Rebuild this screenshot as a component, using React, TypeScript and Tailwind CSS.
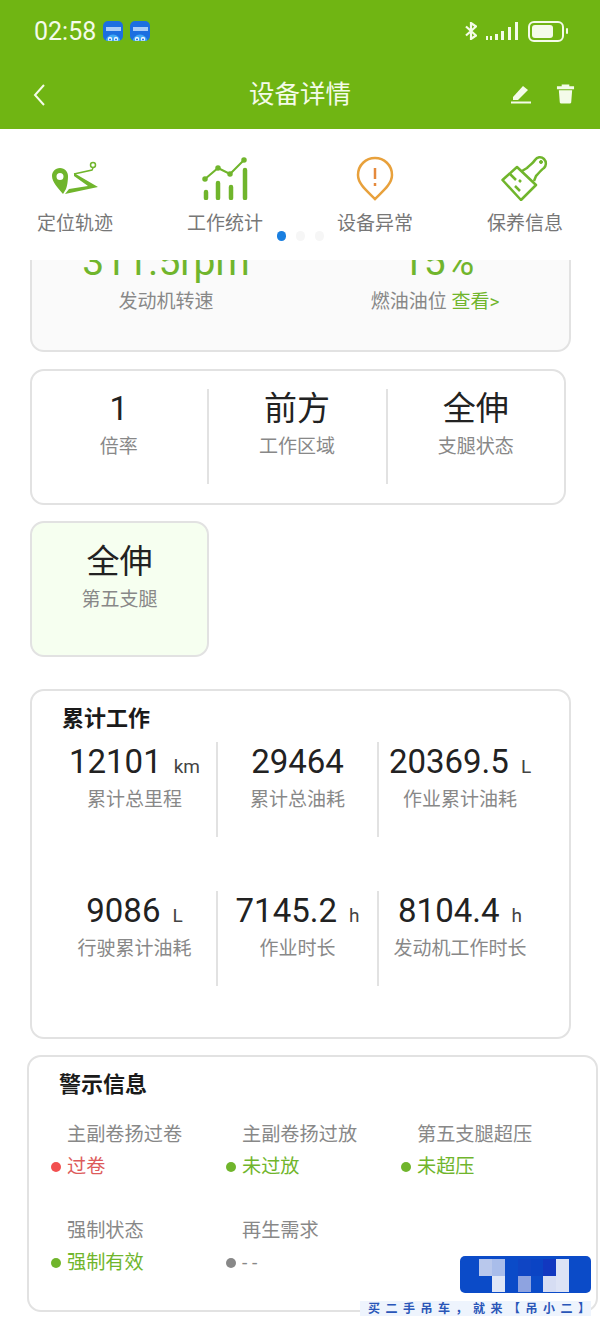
import React from "react";

const cjk = "font-['Roboto','Noto_Sans_CJK_SC',sans-serif]";

const AppBadge = () => (
  <div className="relative h-[20px] w-[20px] overflow-hidden rounded-[5px] bg-[#1c6fe0]">
    <div className="mx-auto mt-[6px] h-[4px] w-[15px] bg-[#a9cdf6]" />
    <svg viewBox="0 0 20 9" className="absolute bottom-0 left-0 h-[9px] w-[20px]">
      <circle cx="10" cy="10" r="7.500" fill="#3fa9f5" />
      <circle cx="7" cy="7" r="2.200" fill="#e8f4ff" />
      <circle cx="13" cy="7" r="2.200" fill="#e8f4ff" />
      <circle cx="7" cy="7.500" r="1" fill="#1c6fe0" />
      <circle cx="13" cy="7.500" r="1" fill="#1c6fe0" />
    </svg>
  </div>
);

const StatusBar = () => (
  <div className="flex h-[62px] items-center justify-between pl-[34px] pr-[36px]">
    <div className="flex items-center">
      <span className="text-[25px] leading-none text-[#f4fbe9]">02:58</span>
      <div className="ml-[7px] flex gap-[7px]">
        <AppBadge />
        <AppBadge />
      </div>
    </div>
    <div className="flex items-center">
      <svg viewBox="0 0 12 18" className="h-[18px] w-[12px]" fill="none" stroke="#f4fbe9" strokeWidth="2.200">
        <path d="M1 4.500l10 9-5 3.500V1l5 3.500-10 9" />
      </svg>
      <svg viewBox="0 0 34 19" className="ml-[9px] h-[19px] w-[34px]" fill="#f4fbe9">
        <rect x="0" y="14" width="2" height="4" />
        <rect x="4" y="14" width="2" height="4" />
        <rect x="9" y="12" width="3" height="6" />
        <rect x="15" y="9" width="3" height="9" />
        <rect x="22" y="5" width="3" height="13" />
        <rect x="29" y="0" width="3" height="18" />
      </svg>
      <div className="relative ml-[8px] flex h-[21px] w-[36px] items-center rounded-[6px] border-2 border-[#f4fbe9] p-[2px]">
        <div className="h-full w-[21px] rounded-[3px] bg-[#f4fbe9]" />
        <div className="absolute right-[-6px] h-[6px] w-[2px] rounded-full bg-[#f4fbe9]" />
      </div>
    </div>
  </div>
);

const TitleBar = () => (
  <div className="relative flex h-[67px] items-start justify-center pt-[14px]">
    <svg viewBox="0 0 14 24" className="absolute left-[32px] top-[21px] h-[24px] w-[14px]" fill="none" stroke="#f4fbe9" strokeWidth="2">
      <path d="M12 2L3 12l9 10" />
    </svg>
    <span className="text-[25.500px] leading-[36px] text-[#f4fbe9]">设备详情</span>
    <svg viewBox="0 0 22 22" className="absolute left-[510px] top-[20px] h-[22px] w-[22px]" fill="#f4fbe9">
      <path d="M3 15L13 4l5 4L8 18H3z" />
      <rect x="1" y="19.500" width="20" height="2" />
    </svg>
    <svg viewBox="0 0 20 22" className="absolute left-[556px] top-[20px] h-[22px] w-[19px]" fill="#f4fbe9">
      <path d="M6 2h8v2h5v3H1V4h5z" />
      <path d="M3 8h14l-1 13a1.500 1.500 0 0 1-1.500 1h-9A1.500 1.500 0 0 1 4 21z" />
    </svg>
  </div>
);

const NavItem = ({ icon, label }: { icon: React.ReactNode; label: string }) => (
  <div className="flex w-[150px] flex-col items-center">
    <div className="flex h-[46px] items-center justify-center">{icon}</div>
    <span className="mt-[9px] text-[19px] leading-[28px] text-[#777777]">{label}</span>
  </div>
);

const NavIcons = () => (
  <div className="relative z-10 h-[131px] bg-white pt-[26px]">
    <div className="flex">
      <NavItem
        label="定位轨迹"
        icon={
          <svg viewBox="0 0 46 36" className="h-[36px] w-[46px]" fill="#70b52c">
            <path fillRule="evenodd" d="M8 8C3 8 0 12 0 16c0 6 6 12 11 18l3-5c1-2 2-8 2-13 0-4-3-8-8-8zm0 5a3.500 3.500 0 1 1 0 7 3.500 3.500 0 0 1 0-7z" />
            <path d="M22 13l24 14-33 7 4-5 19-3-14-10z" />
            <path d="M22 14l18-4 1-2" fill="none" stroke="#70b52c" strokeWidth="1.500" />
            <circle cx="41" cy="5" r="2.500" fill="none" stroke="#70b52c" strokeWidth="1.500" />
          </svg>
        }
      />
      <NavItem
        label="工作统计"
        icon={
          <svg viewBox="0 0 48 44" className="h-[44px] w-[48px]" fill="none" stroke="#70b52c" strokeWidth="4.500" strokeLinecap="round">
            <path d="M5 36v6M17 27v15M30 31v11M44 14v28" />
            <path d="M4 23l13-11 12 6 14-14" strokeWidth="2" />
            <circle cx="4" cy="23" r="2" fill="#70b52c" strokeWidth="1.500" />
            <circle cx="17" cy="12" r="2" fill="#70b52c" strokeWidth="1.500" />
            <circle cx="29" cy="18" r="2" fill="#70b52c" strokeWidth="1.500" />
            <circle cx="43" cy="4" r="2" fill="#70b52c" strokeWidth="1.500" />
          </svg>
        }
      />
      <NavItem
        label="设备异常"
        icon={
          <svg viewBox="0 0 38 45" className="h-[45px] w-[38px]" fill="none" stroke="#e8a13c" strokeWidth="2.500">
            <path d="M19 43C11 35 2 28 2 19 2 9 10 2 19 2s17 7 17 17c0 9-9 16-17 24z" />
            <path d="M19 12v11" stroke="#e58a3c" />
            <path d="M19 27v3" stroke="#e58a3c" />
          </svg>
        }
      />
      <NavItem
        label="保养信息"
        icon={
          <svg viewBox="0 0 48 46" className="h-[46px] w-[48px]" fill="none" stroke="#70b52c" strokeWidth="2.500" strokeLinejoin="round">
            <path d="M1.500 25L16 12l19 18-15 15z" />
            <path d="M21 16l5-3c2-2 6-5 8-8 2-3 6-4 9-1 3 3 2 7 0 9-3 2-6 6-8 8l-2 5" />
            <circle cx="40" cy="7" r="1.500" fill="#70b52c" strokeWidth="1" />
            <path d="M9 19l6 6M14 31l5 5M20 27l-2-2" />
          </svg>
        }
      />
    </div>
    <div className="absolute left-[277px] top-[102px] flex gap-[10px]">
      <div className="h-[10px] w-[9px] rounded-full bg-[#1a7fe0]" />
      <div className="h-[10px] w-[9px] rounded-full bg-[#f6f6f6]" />
      <div className="h-[10px] w-[9px] rounded-full bg-[#f6f6f6]" />
    </div>
  </div>
);

const Stat = ({ value, unit, label }: { value: string; unit?: string; label: string }) => (
  <div className="flex flex-col items-center">
    <div className="flex h-[38px] items-baseline whitespace-nowrap">
      <span className="text-[33px] leading-[38px] text-[#222222]">{value}</span>
      {unit && <span className="ml-[12px] text-[19px] text-[#444444]">{unit}</span>}
    </div>
    <span className="mt-[5px] whitespace-nowrap text-[19px] leading-[28px] text-[#888888]">{label}</span>
  </div>
);

const Divider = () => <div className="mt-[-1px] h-[95px] w-[2px] shrink-0 bg-[#e2e2e2]" />;

const Warn = ({ label, value, color, dot }: { label: string; value: string; color: string; dot: string }) => (
  <div className="relative w-[175px] pl-[38px]">
    <div className="whitespace-nowrap text-[19.200px] leading-[28px] text-[#888888]">{label}</div>
    <div className={`mt-[4px] flex h-[28px] items-center whitespace-nowrap text-[19.200px] ${color}`}>
      <div className={`absolute left-[22px] h-[10px] w-[10px] rounded-full ${dot}`} />
      {value}
    </div>
  </div>
);

export default function App() {
  return (
    <div className={`relative h-[1326px] w-[600px] overflow-hidden bg-white ${cjk}`}>
      <div className="h-[129px] bg-[#70b513]">
        <StatusBar />
        <TitleBar />
      </div>
      <NavIcons />
      <div className="h-[1066px] overflow-hidden">
        {/* clipped first card, scrolled under the icon row */}
        <div className="ml-[30px] mt-[-20px] h-[112px] w-[541px] rounded-b-[14px] border-2 border-[#e2e2e2] bg-[#fafafa]">
          <div className="flex">
            <div className="ml-[14px] flex w-[240px] flex-col items-center">
              <span className="text-[39px] leading-[40px] text-[#70b52c]">311.5rpm</span>
              <span className="mt-[6px] text-[19px] leading-[28px] text-[#888888]">发动机转速</span>
            </div>
            <div className="ml-[49px] flex w-[200px] flex-col items-center">
              <span className="pl-[6px] text-[39px] leading-[40px] text-[#70b52c]">15%</span>
              <span className="mt-[6px] whitespace-nowrap text-[19px] leading-[28px] text-[#888888]">
                燃油油位 <span className="text-[#70b52c]">查看&gt;</span>
              </span>
            </div>
          </div>
        </div>

        <div className="ml-[30px] mt-[17px] flex h-[136px] w-[536px] items-start rounded-[14px] border-2 border-[#e2e2e2] bg-white pt-[19px]">
          <div className="w-[176px] pr-[2px]"><Stat value="1" label="倍率" /></div>
          <Divider />
          <div className="w-[177px] pr-[1px]"><Stat value="前方" label="工作区域" /></div>
          <Divider />
          <div className="w-[177px]"><Stat value="全伸" label="支腿状态" /></div>
        </div>

        <div className="ml-[30px] mt-[16px] h-[136px] w-[179px] rounded-[14px] border-2 border-[#e2e2e2] bg-[#f6fff0] pt-[20px]">
          <Stat value="全伸" label="第五支腿" />
        </div>

        <div className="ml-[30px] mt-[32px] h-[350px] w-[541px] rounded-[14px] border-2 border-[#e2e2e2] bg-white">
          <div className="ml-[30px] mt-[13px] text-[22px] font-bold leading-[30px] text-[#1a1a1a]">累计工作</div>
          <div className="mt-[9px] flex items-start">
            <div className="w-[184px] pl-[21px]"><Stat value="12101" unit="km" label="累计总里程" /></div>
            <Divider />
            <div className="w-[159px]"><Stat value="29464" label="累计总油耗" /></div>
            <Divider />
            <div className="w-[162px]"><Stat value="20369.5" unit="L" label="作业累计油耗" /></div>
          </div>
          <div className="mt-[55px] flex items-start">
            <div className="w-[184px] pl-[21px]"><Stat value="9086" unit="L" label="行驶累计油耗" /></div>
            <Divider />
            <div className="w-[159px]"><Stat value="7145.2" unit="h" label="作业时长" /></div>
            <Divider />
            <div className="w-[162px]"><Stat value="8104.4" unit="h" label="发动机工作时长" /></div>
          </div>
        </div>

        <div className="ml-[27px] mt-[16px] h-[257px] w-[571px] rounded-[14px] border-2 border-[#e2e2e2] bg-white">
          <div className="ml-[30px] mt-[13px] text-[22px] font-bold leading-[30px] text-[#1a1a1a]">警示信息</div>
          <div className="mt-[21px] flex">
            <Warn label="主副卷扬过卷" value="过卷" color="text-[#dd5b5b]" dot="bg-[#f25050]" />
            <Warn label="主副卷扬过放" value="未过放" color="text-[#70b52c]" dot="bg-[#70b52c]" />
            <Warn label="第五支腿超压" value="未超压" color="text-[#70b52c]" dot="bg-[#70b52c]" />
          </div>
          <div className="mt-[36px] flex">
            <Warn label="强制状态" value="强制有效" color="text-[#70b52c]" dot="bg-[#70b52c]" />
            <Warn label="再生需求" value="- -" color="text-[#888888]" dot="bg-[#888888]" />
          </div>
        </div>
      </div>

      {/* watermark over the corner */}
      <div className="absolute left-[460px] top-[1256px] h-[37px] w-[131px] overflow-hidden rounded-[5px] bg-[#0b4bc8] pt-[3px]">
        <div className="grid h-[33px] grid-cols-[19px_13px_13px_13px_13px_12px_13px_13px] grid-rows-[17px_16px]">
          <div />
          <div className="bg-[#b9c8ec]" />
          <div className="bg-[#a9bdea]" />
          <div />
          <div className="bg-[#0f45c4]" />
          <div className="bg-[#0b44c4]" />
          <div className="bg-[#1238c0]" />
          <div className="bg-[#dde3f5]" />
          <div />
          <div />
          <div className="bg-[#dfe6f6]" />
          <div />
          <div className="bg-[#8ea3e0]" />
          <div />
          <div className="bg-[#d6ddf3]" />
          <div className="bg-[#dde3f5]" />
        </div>
      </div>
      <div className="absolute left-[360px] top-[1301px] flex h-[15px] w-[231px] items-center whitespace-nowrap bg-[#eef4fd] pl-[8px] text-[12px] font-bold tracking-[5.500px] text-[#2a56b8]">
        买二手吊车，就来【吊小二】
      </div>
    </div>
  );
}
